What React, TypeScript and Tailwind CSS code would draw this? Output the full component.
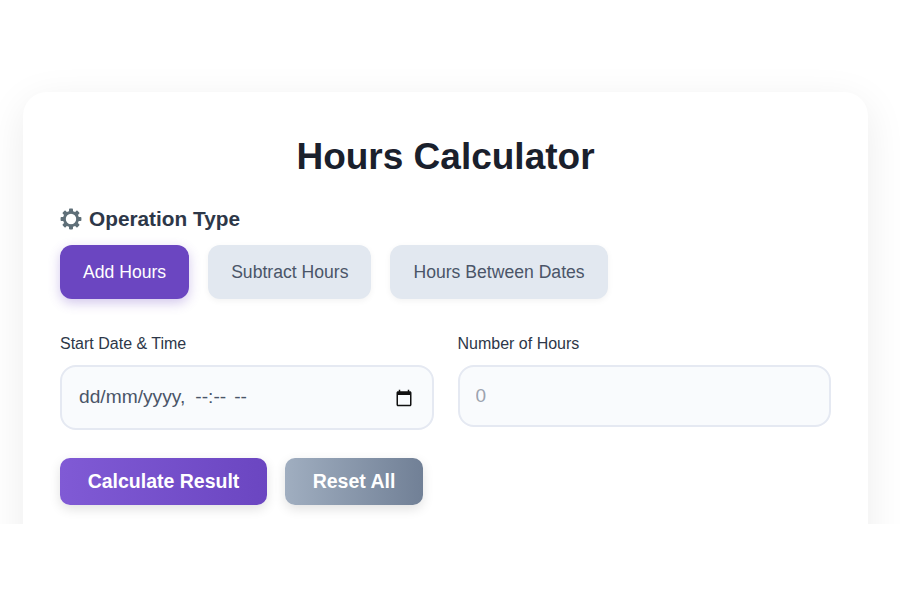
const font = { fontFamily: '"Liberation Sans", Arial, sans-serif' };

const operations = ['Add Hours', 'Subtract Hours', 'Hours Between Dates'];

const teeth = [0, 45, 90, 135, 180, 225, 270, 315];

const GearIcon = () => (
  <svg width="22" height="22" viewBox="0 0 22 22" fill="#5f6f78">
    {teeth.map((deg) => (
      <rect key={deg} x="9" y="0.6" width="4" height="4.6" rx="0.8" transform={`rotate(${deg} 11 11)`} />
    ))}
    <circle cx="11" cy="11" r="6.6" fill="none" stroke="#5f6f78" strokeWidth="2.8" />
  </svg>
);

const CalendarIcon = () => (
  <svg width="18" height="18" viewBox="0 0 24 24" fill="#111">
    <path d="M20 3h-1V1h-2v2H7V1H5v2H4c-1.1 0-2 .9-2 2v16c0 1.1.9 2 2 2h16c1.1 0 2-.9 2-2V5c0-1.1-.9-2-2-2zm0 18H4V8h16v13z" />
  </svg>
);

const App = () => {
  return (
    <div className="h-[524px] overflow-hidden bg-white px-[23px] pt-[92px]" style={font}>
      <div className="h-[500px] w-[845px] rounded-[24px] bg-white px-[37px] pt-[41px] shadow-[0_10px_40px_rgba(0,0,0,0.08)]">
        <h1 className="text-center text-[37px] leading-[48px] font-bold text-[#1a202c]">Hours Calculator</h1>

        <div className="mt-[24px] flex h-[28px] items-center gap-[7px] text-[20.8px] font-bold text-[#2d3748]">
          <GearIcon />
          Operation Type
        </div>

        <div className="mt-[12px] flex gap-[19px]">
          {operations.map((name, i) => (
            <button
              key={name}
              className={`h-[54px] rounded-[12px] px-[23px] text-[17.6px] ${
                i === 0
                  ? 'bg-[#6b46c1] text-white shadow-[0_4px_12px_rgba(107,70,193,0.3)]'
                  : 'bg-[#e2e8f0] text-[#4a5568] shadow-[0_2px_6px_rgba(0,0,0,0.05)]'
              }`}
            >
              {name}
            </button>
          ))}
        </div>

        <div className="mt-[35px] grid grid-cols-2 items-start gap-[24px]">
          <div>
            <div className="mb-[11px] text-[16px] leading-[20px] text-[#2d3748]">Start Date &amp; Time</div>
            <div className="flex h-[65px] items-center justify-between rounded-[16px] border-2 border-[#e5e9f2] bg-[#f9fbfd] pr-[19px] pl-[17px] text-[19.2px] text-[#4a5568]">
              <span className="flex">
                <span>dd/mm/yyyy,</span>
                <span className="ml-[10px]">--:--</span>
                <span className="ml-[8px]">--</span>
              </span>
              <CalendarIcon />
            </div>
          </div>
          <div>
            <div className="mb-[11px] text-[16px] leading-[20px] text-[#2d3748]">Number of Hours</div>
            <input
              placeholder="0"
              className="h-[62px] w-full rounded-[16px] border-2 border-[#e5e9f2] bg-[#f9fbfd] px-[16px] text-[19px] outline-none placeholder:text-[#9ca3af]"
            />
          </div>
        </div>

        <div className="mt-[28px] flex gap-[18px]">
          <button className="h-[47px] w-[207px] rounded-[10px] bg-gradient-to-r from-[#805ad5] to-[#6b46c1] text-[19.5px] font-bold text-white shadow-[0_4px_12px_rgba(0,0,0,0.12)]">
            Calculate Result
          </button>
          <button className="h-[47px] w-[138px] rounded-[10px] bg-gradient-to-r from-[#a0aec0] to-[#718096] text-[19.5px] font-bold text-white shadow-[0_4px_12px_rgba(0,0,0,0.12)]">
            Reset All
          </button>
        </div>
      </div>
    </div>
  );
};

export default App;
